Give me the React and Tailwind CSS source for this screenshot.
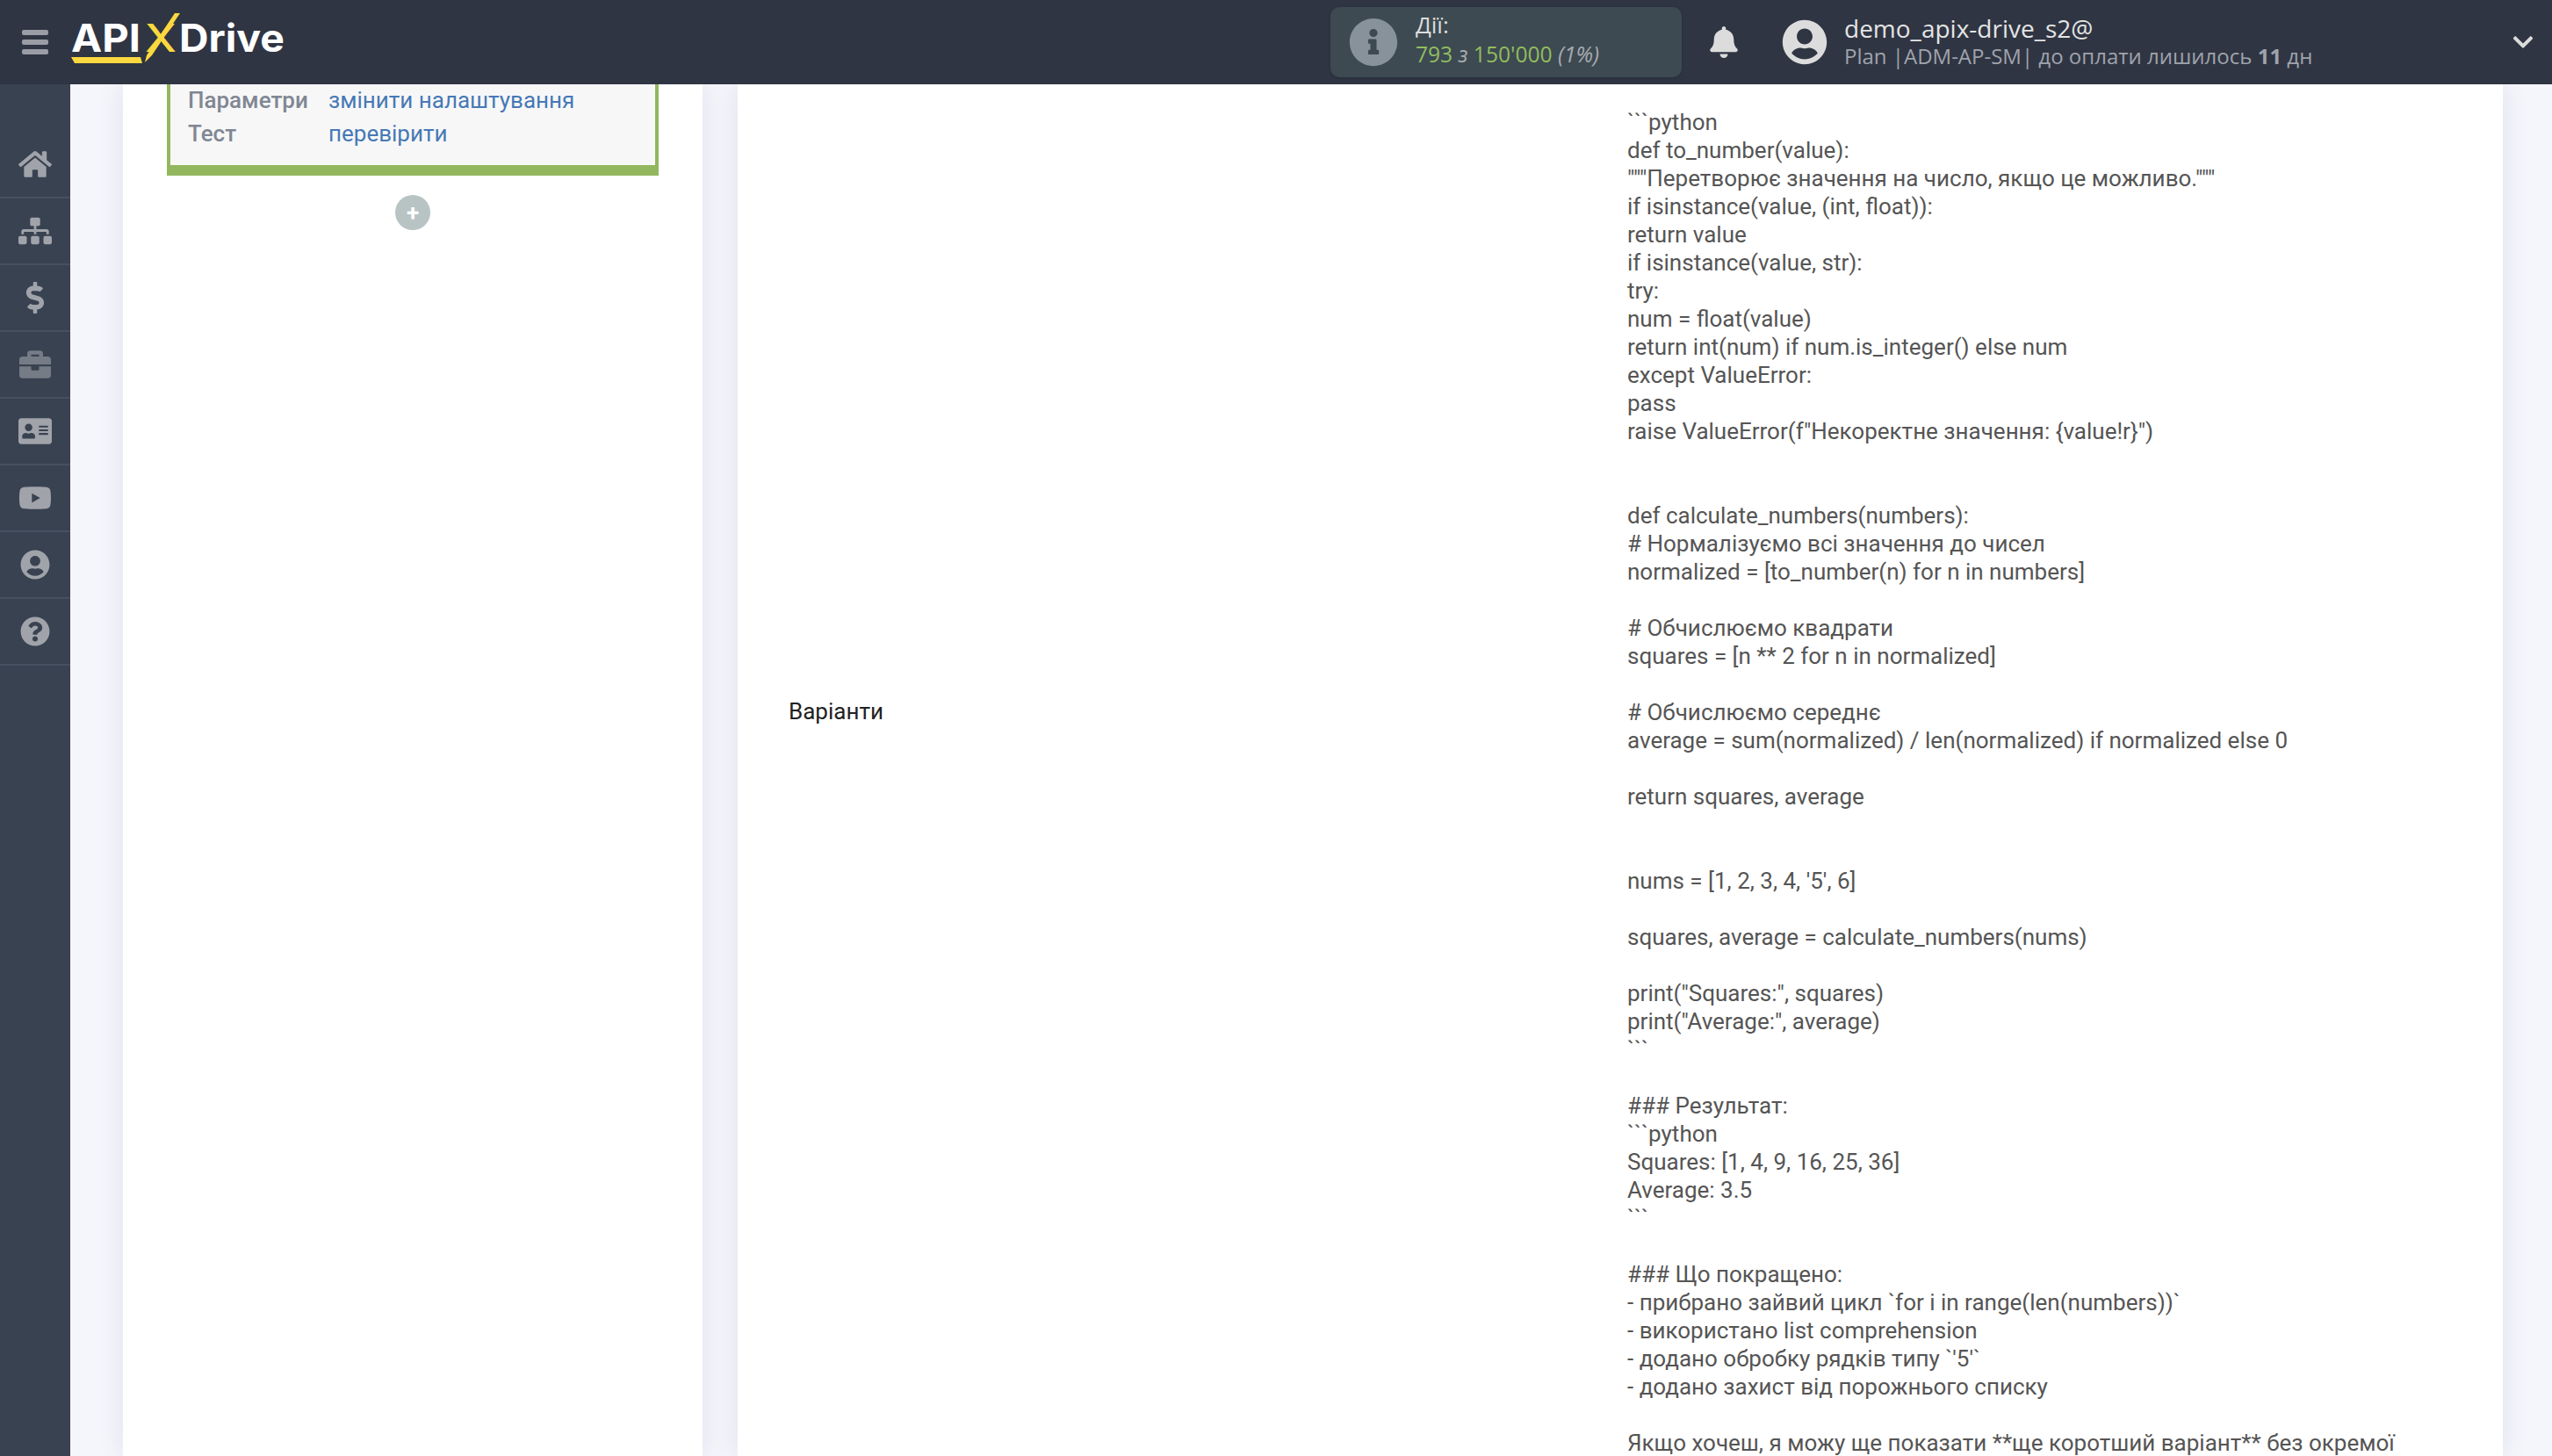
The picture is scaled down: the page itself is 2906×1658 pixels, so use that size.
import React from "react";
import {
  FaHome, FaSitemap, FaDollarSign, FaBriefcase, FaAddressCard, FaYoutube,
  FaUserCircle, FaQuestionCircle, FaBell, FaInfoCircle, FaChevronDown,
} from "react-icons/fa";

const lines = [
  "```python", "def to_number(value):", '"""Перетворює значення на число, якщо це можливо."""',
  "if isinstance(value, (int, float)):", "return value", "if isinstance(value, str):", "try:",
  "num = float(value)", "return int(num) if num.is_integer() else num", "except ValueError:", "pass",
  'raise ValueError(f"Некоректне значення: {value!r}")', "", "",
  "def calculate_numbers(numbers):", "# Нормалізуємо всі значення до чисел",
  "normalized = [to_number(n) for n in numbers]", "", "# Обчислюємо квадрати",
  "squares = [n ** 2 for n in normalized]", "", "# Обчислюємо середнє",
  "average = sum(normalized) / len(normalized) if normalized else 0", "", "return squares, average", "", "",
  "nums = [1, 2, 3, 4, '5', 6]", "", "squares, average = calculate_numbers(nums)", "",
  'print("Squares:", squares)', 'print("Average:", average)', "```", "", "### Результат:", "```python",
  "Squares: [1, 4, 9, 16, 25, 36]", "Average: 3.5", "```", "", "### Що покращено:",
  "- прибрано зайвий цикл `for i in range(len(numbers))`", "- використано list comprehension",
  "- додано обробку рядків типу `'5'`", "- додано захист від порожнього списку", "",
  "Якщо хочеш, я можу ще показати **ще коротший варіант** без окремої",
];

const nav = [
  [FaHome, "text-[38px]"], [FaSitemap, "text-[38px]"], [FaDollarSign, "text-[36px]"],
  [FaBriefcase, "text-[36px] opacity-60"], [FaAddressCard, "text-[38px]"], [FaYoutube, "text-[38px]"],
  [FaUserCircle, "text-[34px]"], [FaQuestionCircle, "text-[34px]"],
];

function Logo() {
  return (
    <svg width="250" height="66" viewBox="0 0 250 66" className="shrink-0">
      <text x="0" y="44" fill="#ffffff" fontFamily="Inter" fontWeight="700" fontSize="44" textLength="79" lengthAdjust="spacingAndGlyphs">API</text>
      <polygon points="0,50 79,50 81,57 4,57" fill="#fbd83f" />
      <text x="84" y="44" fill="#fbd83f" fontFamily="Inter" fontWeight="500" fontSize="44" textLength="36" lengthAdjust="spacingAndGlyphs">X</text>
      <polygon points="118,0 124,0 92,48 84,56 86,48" fill="#fbd83f" />
      <text x="123" y="44" fill="#ffffff" fontFamily="Inter" fontWeight="700" fontSize="44" textLength="120" lengthAdjust="spacingAndGlyphs">Drive</text>
    </svg>
  );
}

export default function App() {
  return (
    <div className="flex h-screen flex-col overflow-hidden bg-[#f5f6fc] font-['Roboto',sans-serif]">
      <header className="relative z-10 flex h-24 shrink-0 items-center bg-[#2f3543] font-['Open_Sans',sans-serif]">
        <div className="ml-[25px] flex w-[30px] flex-col gap-[5px]">
          <span className="h-[6px] rounded-[2px] bg-[#9a9da5]" />
          <span className="h-[6px] rounded-[2px] bg-[#9a9da5]" />
          <span className="h-[6px] rounded-[2px] bg-[#9a9da5]" />
        </div>
        <div className="ml-[26px]"><Logo /></div>
        <div className="ml-[1184px] flex h-20 w-[400px] items-center rounded-[10px] bg-[#3d4a52] pl-[21px] shadow-[0_1px_3px_rgba(0,0,0,0.2)]">
          <FaInfoCircle className="shrink-0 text-[56px] text-[#87929a]" />
          <div className="-mt-[6px] ml-5 flex flex-col leading-[34px]">
            <span className="text-[26px] text-[#dcdcdc]">Дії:</span>
            <span className="text-[24.6px] text-[#92bd5d]">
              793 <span className="italic text-[#a8abb0]">з</span> 150'000 <span className="italic text-[#a8abb0]">(1%)</span>
            </span>
          </div>
        </div>
        <FaBell className="ml-[30px] shrink-0 text-[36px] text-[#dcdcdc]" />
        <FaUserCircle className="ml-[48px] shrink-0 text-[52px] text-[#dcdcdc]" />
        <div className="ml-[19px] flex flex-col leading-[32px]">
          <span className="text-[28px] text-[#e4e4e4]">demo_apix-drive_s2@</span>
          <span className="text-[24px] text-[#9fa3ab]">Plan |ADM-AP-SM| до оплати лишилось <b>11</b> дн</span>
        </div>
        <FaChevronDown className="ml-auto mr-[20px] shrink-0 text-[26px] text-[#dcdcdc]" />
      </header>

      <div className="flex min-h-0 flex-1">
        <aside className="w-20 shrink-0 bg-[#394250] pt-[54px]">
          {nav.map(([Icon, size], i) => (
            <div key={i} className="flex h-[76px] items-center justify-center border-b-2 border-[#465060] text-[#a0a3aa]">
              <Icon className={size} />
            </div>
          ))}
        </aside>

        <main className="flex min-w-0 flex-1 gap-10 pl-[60px] pr-14">
          <section className="w-[660px] shrink-0 bg-white pl-[50px] shadow-[0_0_30px_rgba(10,15,50,0.09)]">
            <div className="h-[104px] w-[560px] border-x-4 border-b-[12px] border-[#93b75f] bg-[#f7f7f8] pl-5 text-[26px]">
              <div className="flex h-9 leading-9">
                <span className="w-[160px] font-medium text-[#808793]">Параметри</span>
                <span className="text-[#4679b5]">змінити налаштування</span>
              </div>
              <div className="flex leading-[41px]">
                <span className="w-[160px] font-medium text-[#808793]">Тест</span>
                <span className="text-[#4679b5]">перевірити</span>
              </div>
            </div>
            <div className="ml-[260px] mt-[22px] flex h-10 w-10 items-center justify-center rounded-full bg-[#b8c4c4] text-[26px] font-bold leading-none text-white">+</div>
          </section>

          <section className="flex min-w-0 flex-1 bg-white pl-[58px] shadow-[0_0_30px_rgba(10,15,50,0.09)]">
            <div className="w-[955px] shrink-0 pt-[698px] text-[26px] leading-[32px] text-[#222222]">Варіанти</div>
            <div className="whitespace-pre pt-[27px] text-[26px] leading-[32px] text-[#555555]">
              {lines.map((l, i) => (
                <div key={i} className="h-[32px]">{l}</div>
              ))}
            </div>
          </section>
        </main>
      </div>
    </div>
  );
}
